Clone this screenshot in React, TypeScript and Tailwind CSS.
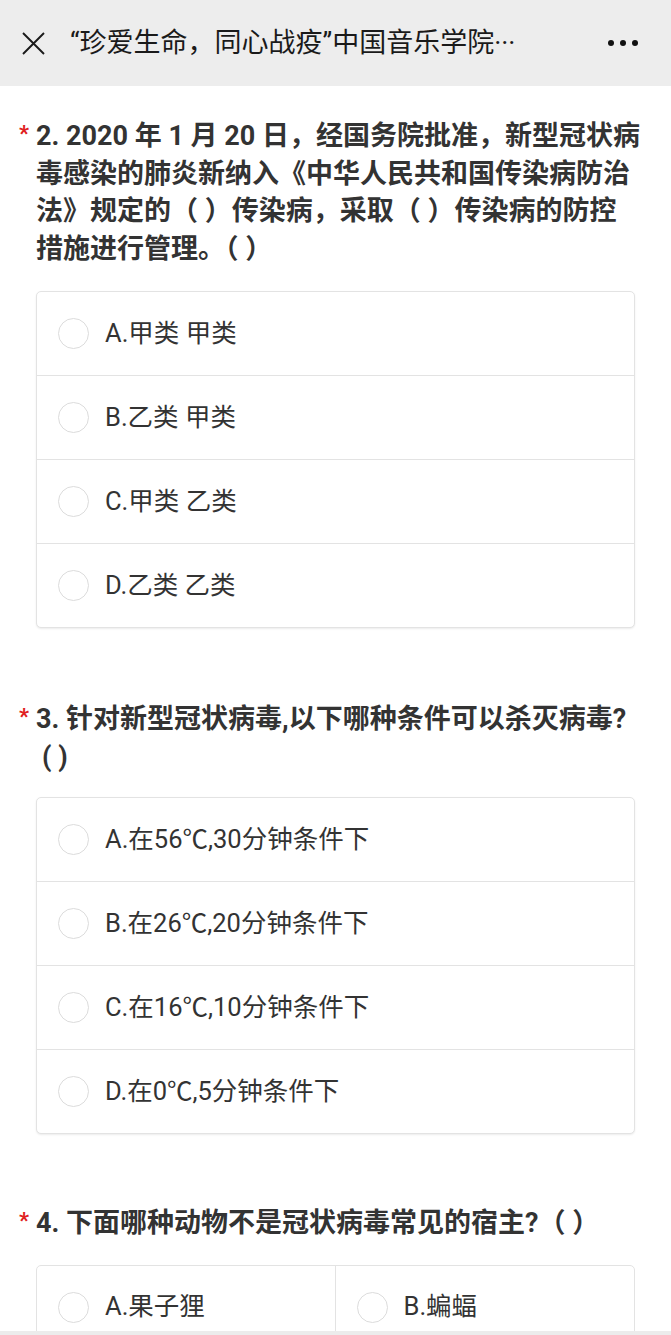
import React from "react";

const font = { fontFamily: 'Roboto, "Noto Sans CJK SC", "Noto Sans", sans-serif' };

function Radio() {
  return <span className="block w-[31px] h-[31px] rounded-full border-[1.5px] border-[#dcdcdc] bg-white shrink-0" />;
}

function Option({ label }: { label: string }) {
  return (
    <div className="flex items-center h-[83px] pl-[21px] gap-[16px]">
      <Radio />
      <span className="text-[25.5px] text-[#333] leading-none">{label}</span>
    </div>
  );
}

function Title({ lines }: { lines: React.ReactNode[] }) {
  return (
    <div className="relative pl-[36px] pr-[10px] font-bold text-[27px] leading-[37.5px] text-[#333]">
      <span className="absolute left-[19px] top-[1px] text-[#e02020] text-[22px] leading-[30px]">*</span>
      {lines.map((l, i) => (
        <div key={i} className="whitespace-nowrap">{l}</div>
      ))}
    </div>
  );
}

function Box({ options }: { options: string[] }) {
  return (
    <div className="mx-[36px] border border-[#e3e3e3] rounded-[5px] bg-white shadow-[0_1px_2px_rgba(0,0,0,0.08)]">
      {options.map((o, i) => (
        <div key={i} className={i > 0 ? "border-t border-[#e3e3e3]" : ""}>
          <Option label={o} />
        </div>
      ))}
    </div>
  );
}

export default function App() {
  return (
    <div style={font} className="w-[671px] h-[1335px] flex flex-col bg-white overflow-hidden">
      <div className="h-[86px] shrink-0 bg-[#ededed] flex items-center">
        <svg width="23" height="23" viewBox="0 0 23 23" className="ml-[22px]">
          <path d="M1 1 L22 22 M22 1 L1 22" stroke="#1a1a1a" strokeWidth="1.9" fill="none" />
        </svg>
        <div className="ml-[25px] text-[27px] text-[#1a1a1a] whitespace-nowrap leading-none">
          “珍爱生命，同心战疫”中国音乐学院···
        </div>
        <div className="ml-auto mr-[33px] flex gap-[6px]">
          <span className="w-[6px] h-[6px] rounded-full bg-[#111]" />
          <span className="w-[6px] h-[6px] rounded-full bg-[#111]" />
          <span className="w-[6px] h-[6px] rounded-full bg-[#111]" />
        </div>
      </div>
      <div className="flex-1 overflow-hidden">
        <div className="pt-[32px]">
          <Title
            lines={[
              "2. 2020 年 1 月 20 日，经国务院批准，新型冠状病",
              "毒感染的肺炎新纳入《中华人民共和国传染病防治",
              "法》规定的（ ）传染病，采取（ ）传染病的防控",
              "措施进行管理。（ ）",
            ]}
          />
        </div>
        <div className="mt-[23px]">
          <Box options={["A.甲类 甲类", "B.乙类 甲类", "C.甲类 乙类", "D.乙类 乙类"]} />
        </div>
        <div className="mt-[73px]">
          <Title lines={["3. 针对新型冠状病毒,以下哪种条件可以杀灭病毒?", <span className="pl-[6px]">( )</span>]} />
        </div>
        <div className="mt-[21px]">
          <Box
            options={["A.在56℃,30分钟条件下", "B.在26℃,20分钟条件下", "C.在16℃,10分钟条件下", "D.在0℃,5分钟条件下"]}
          />
        </div>
        <div className="mt-[71px]">
          <Title lines={["4. 下面哪种动物不是冠状病毒常见的宿主?（ ）"]} />
        </div>
        <div className="mt-[22px] mx-[36px] border border-[#e3e3e3] rounded-t-[5px] grid grid-cols-2">
          <div className="border-r border-[#e3e3e3]">
            <Option label="A.果子狸" />
          </div>
          <div>
            <Option label="B.蝙蝠" />
          </div>
        </div>
      </div>
      <div className="h-[4px] shrink-0 bg-[#ececec]" />
    </div>
  );
}
